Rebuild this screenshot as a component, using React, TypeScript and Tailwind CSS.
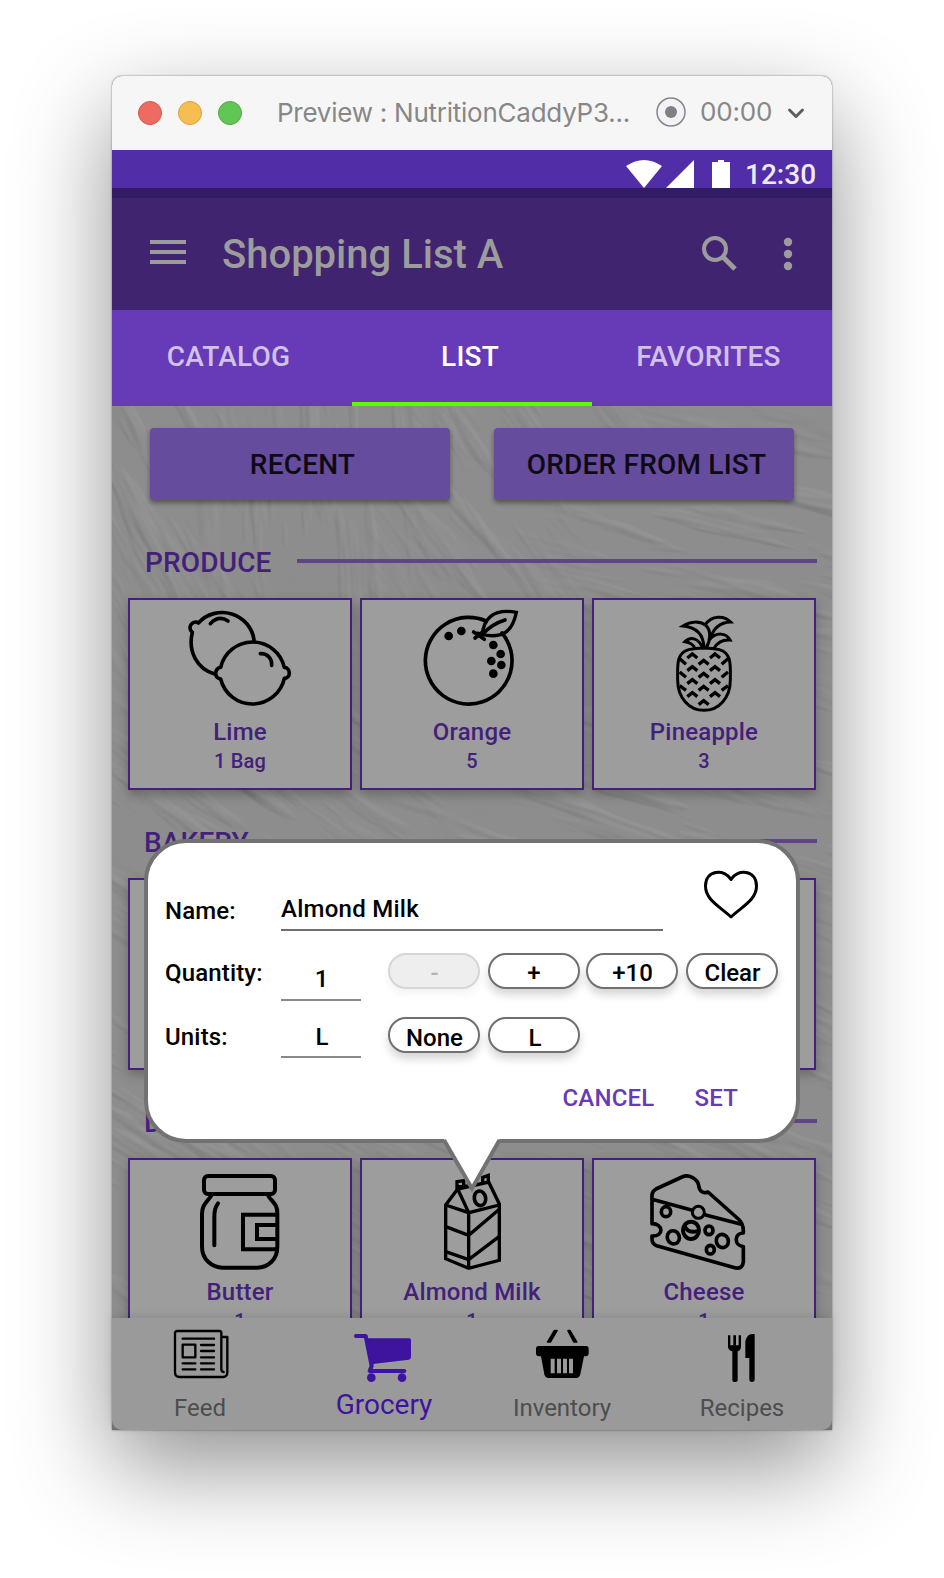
import React from "react";

type IconProps = { children: React.ReactNode; viewBox: string };

function FoodArt({ children, viewBox }: IconProps) {
  return (
    <svg
      className="h-[116px] w-[220px] shrink-0"
      viewBox={viewBox}
      fill="none"
      stroke="#000"
      strokeWidth={11}
      strokeLinecap="round"
      strokeLinejoin="round"
    >
      {children}
    </svg>
  );
}

function LimeIcon() {
  return (
    <FoodArt viewBox="60 60 660 348">
      <path d="M432 180 A96 94 0 0 0 265 129 C250 119 229 140 247 157 C233 215 262 268 314 282" />
      <path d="M301 131 Q326 104 354 123" />
      <path d="M332 262 A98 98 0 0 1 523 262 C543 264 543 294 523 295 A98 98 0 0 1 332 297 C311 292 313 267 332 262 Z" />
      <path d="M451 221 C471 219 486 235 485 256" />
    </FoodArt>
  );
}

function OrangeIcon() {
  return (
    <FoodArt viewBox="0 60 660 348">
      <path d="M372 123 A130 130 0 1 0 420 159" />
      <path d="M360 164 C366 120 389 84 463 97 C451 155 424 176 360 164 Z" strokeWidth={10} strokeLinejoin="miter" />
      <path d="M360 164 Q389 132 429 120 M335 156 L367 178 M339 174 L364 154 M347 160 L361 164" />
      <g fill="#000" stroke="none">
        <circle cx="260" cy="168" r="13" />
        <circle cx="298" cy="153" r="13" />
        <circle cx="394" cy="195" r="13" />
        <circle cx="416" cy="222" r="13" />
        <circle cx="388" cy="243" r="13" />
        <circle cx="418" cy="255" r="13" />
        <circle cx="394" cy="281" r="13" />
      </g>
    </FoodArt>
  );
}

const scales: [number, number][] = [
  [667, 222], [735, 222], [701, 241], [667, 260], [735, 260], [701, 280],
  [667, 299], [735, 299], [701, 319], [667, 338], [735, 338], [701, 362],
];

function PineappleIcon() {
  return (
    <FoodArt viewBox="372 60 660 348">
      <path
        strokeWidth={9}
        d="M656 209 C682 202 722 202 748 209 C786 220 781 256 781 300 C781 354 746 391 702 391 C658 391 623 354 623 300 C623 256 618 220 656 209 Z"
      />
      <path
        strokeWidth={9}
        strokeLinejoin="miter"
        d="M702 204 C701 167 683 142 639 138 C664 122 690 124 706 135 C724 149 722 181 709 203 M706 134 C725 105 762 106 782 126 C745 127 728 151 721 177 M698 204 C687 176 663 167 645 185 C661 187 669 192 675 205 M717 180 C740 155 768 158 780 180 C755 178 742 187 732 205"
      />
      <g strokeLinecap="butt" strokeLinejoin="miter" strokeWidth={10}>
        {scales.map(([x, y]) => (
          <path key={`${x}-${y}`} d={`M${x - 15} ${y + 12} L${x} ${y} L${x + 15} ${y + 12}`} />
        ))}
        <path d="M629 236 L648 253 M629 276 L648 292 M629 317 L648 331 M774 236 L755 253 M774 276 L755 292 M774 317 L755 331" />
      </g>
    </FoodArt>
  );
}

function ButterIcon() {
  return (
    <FoodArt viewBox="60 90 660 348">
      <g strokeWidth={12}>
        <rect x="282" y="138" width="213" height="54" rx="12" />
        <path d="M303 198 C290 218 276 224 276 252 L276 350 C276 389 307 413 338 413 L441 413 C474 413 502 389 502 350 L502 249 C502 221 487 217 475 198" />
        <path d="M324 220 C312 236 313 248 313 263 L313 346" />
        <path strokeLinecap="butt" strokeLinejoin="miter" d="M502 254 L399 254 L399 358 L502 358 M502 285 L441 285 L441 327 L502 327" />
      </g>
    </FoodArt>
  );
}

function MilkIcon() {
  return (
    <FoodArt viewBox="0 90 660 348">
      <g strokeWidth={10} strokeLinejoin="miter" strokeLinecap="butt">
        <path d="M251 225 L287 177 L380 156 L412 222 L412 391 L320 415 L251 386 Z" />
        <path d="M251 225 L320 248 L412 225 M287 177 L320 248 L320 415 M251 290 L320 316 L412 238 M251 365 L320 389 L412 319" />
        <path d="M285 178 L285 155 L305 152 L305 172 M362 158 L362 142 L379 136 L379 157 M285 171 L318 168" />
        <ellipse cx="354" cy="205" rx="17" ry="22" strokeWidth={11} transform="rotate(-10 354 205)" />
      </g>
    </FoodArt>
  );
}

function CheeseIcon() {
  return (
    <FoodArt viewBox="372 90 660 348">
      <path d="M546 208 L546 195 Q547 183 558 177 L636 141 C656 131 684 147 686 167 C688 187 703 191 714 186 L805 267 Q820 280 820 302 L820 309 C791 309 792 347 820 350 L820 396 Q818 417 797 414 L560 347 Q546 342 546 327 L546 318 C583 320 580 281 546 281 Z" />
      <path d="M546 208 L667 241 M704 254 L814 283" />
      <circle cx="685" cy="247" r="18" strokeWidth={9} />
      <ellipse cx="588" cy="245" rx="14" ry="15" />
      <ellipse cx="610" cy="322" rx="18" ry="20" transform="rotate(-20 610 322)" />
      <ellipse cx="663" cy="301" rx="24" ry="26" strokeWidth={12} />
      <path d="M644 287 Q655 313 684 302" />
      <ellipse cx="717" cy="301" rx="12" ry="13" />
      <ellipse cx="757" cy="333" rx="18" ry="20" transform="rotate(-20 757 333)" />
      <ellipse cx="721" cy="359" rx="12" ry="13" />
    </FoodArt>
  );
}

function FoodCard({ art, name, amount }: { art?: React.ReactNode; name: string; amount: string }) {
  return (
    <div className="flex h-48 w-56 flex-col items-center border-2 border-[#43217a] bg-[#9d9d9d] font-medium text-[#43217a] shadow-[0_5px_10px_rgba(0,0,0,0.24)]">
      {art ?? <div className="h-[116px]" />}
      <div className="h-8 text-2xl leading-8 tracking-[0.2px]">{name}</div>
      <div className="h-7 text-xl leading-[26px] tracking-[0.2px]">{amount}</div>
    </div>
  );
}

function Section({ title, children, indent }: { title: string; children: React.ReactNode; indent: string }) {
  return (
    <section className="flex h-[280px] flex-col">
      <div className="flex h-[52px] items-start pr-[15px]">
        <h2 className={`pt-px text-[28px] leading-8 font-medium tracking-[0.15px] text-[#43217a] ${indent}`}>{title}</h2>
        <div className="mt-[13px] h-1 w-[520px] bg-[#5f4586]" />
      </div>
      <div className="flex gap-2 pl-4">{children}</div>
    </section>
  );
}

const patches = [
  { x: 60, y: 120, w: 260, h: 300, r: 62, s: 3 },
  { x: 260, y: 90, w: 300, h: 260, r: 86, s: 8 },
  { x: 430, y: 120, w: 280, h: 280, r: 54, s: 14 },
  { x: 620, y: 150, w: 320, h: 260, r: 14, s: 21 },
  { x: 180, y: 420, w: 500, h: 300, r: 36, s: 29 },
  { x: 560, y: 430, w: 460, h: 300, r: 18, s: 33 },
  { x: 100, y: 740, w: 500, h: 460, r: 30, s: 35 },
  { x: 560, y: 740, w: 500, h: 460, r: 24, s: 47 },
];

function Plaster() {
  return (
    <svg className="absolute inset-0 h-full w-full opacity-[0.16]" viewBox="0 0 720 912" aria-hidden="true">
      <defs>
        <radialGradient id="fade">
          <stop offset="0.55" stopColor="#fff" />
          <stop offset="1" stopColor="#fff" stopOpacity="0" />
        </radialGradient>
        {patches.map((p) => (
          <React.Fragment key={p.s}>
            <filter id={`grain${p.s}`} x="0" y="0" width="1" height="1" colorInterpolationFilters="sRGB">
              <feTurbulence type="fractalNoise" baseFrequency="0.007 0.045" numOctaves={3} seed={p.s} />
              <feColorMatrix type="matrix" values="0 0 0 0 0  0 0 0 0 0  0 0 0 0 0  2.4 0 0 0 -1.2" />
              <feGaussianBlur stdDeviation="0.7" />
              <feDiffuseLighting surfaceScale={2} diffuseConstant={0.78} lightingColor="#ffffff">
                <feDistantLight azimuth={250} elevation={46} />
              </feDiffuseLighting>
            </filter>
            <mask id={`patch${p.s}`} maskUnits="userSpaceOnUse" x="-200" y="-200" width="1200" height="1400">
              <ellipse cx={p.x} cy={p.y} rx={p.w * 0.7} ry={p.h * 0.7} fill="url(#fade)" />
            </mask>
          </React.Fragment>
        ))}
      </defs>
      {patches.map((p) => (
        <g key={p.s} mask={`url(#patch${p.s})`}>
          <g transform={`rotate(${p.r} ${p.x} ${p.y})`}>
            <rect x={p.x - 400} y={p.y - 400} width={800} height={800} filter={`url(#grain${p.s})`} />
          </g>
        </g>
      ))}
    </svg>
  );
}

function Pill({ label, disabled, nudge, text }: { label: string; disabled?: boolean; nudge?: string; text?: string }) {
  return (
    <button
      className={`flex h-9 w-[92px] items-center justify-center rounded-full border-2 text-2xl font-medium ${nudge ?? ""} ${
        disabled
          ? "border-[#d6d6d6] bg-[#eeeeee] text-[#b4b4b4] shadow-[0_5px_9px_rgba(0,0,0,0.05)]"
          : "border-[#707070] bg-white text-black shadow-[0_6px_9px_rgba(0,0,0,0.16)]"
      }`}
    >
      <span className={`leading-8 ${text ?? "pt-[3px]"}`}>{label}</span>
    </button>
  );
}

function EditPopup() {
  return (
    <div className="absolute top-[763px] left-8 h-[304px] w-[656px] rounded-[42px] border-4 border-[#727272] bg-white text-2xl font-medium text-black">
      <div className="flex h-[88px] pl-[17px]">
        <div className="w-[116px] pt-[52px] leading-8 tracking-[0.1px]">Name:</div>
        <div className="h-[88px] w-[382px] border-b-2 border-[#707070] pt-[50px] leading-8 tracking-[0.25px]">Almond Milk</div>
        <svg className="mt-[27px] ml-[40px] h-[50px] w-[56px]" viewBox="0 0 56 50" fill="none" stroke="#000" strokeWidth={3} strokeLinejoin="round">
          <path d="M28 9.500 C22 -1.500 2.500 -0.500 2.500 16 C2.500 30 17 36.500 28 47 C39 36.500 53.500 30 53.500 16 C53.500 -0.500 34 -1.500 28 9.500 Z" />
        </svg>
      </div>
      <div className="flex h-[70px] pl-[17px]">
        <div className="w-[116px] pt-[26px] leading-8 tracking-[0.15px]">Quantity:</div>
        <div className="h-[70px] w-20 border-b-2 border-[#8a8a8a] pt-[32px] pl-px text-center leading-8">1</div>
        <div className="flex pt-[22px] pl-[27px]">
          <Pill label="-" disabled text="pt-[3px] pl-px" />
          <Pill label="+" nudge="ml-2" />
          <Pill label="+10" nudge="ml-1.5" text="pt-[3px] pl-px" />
          <Pill label="Clear" nudge="ml-2" text="pt-[3px] pl-px" />
        </div>
      </div>
      <div className="flex h-[57px] pl-[17px]">
        <div className="w-[116px] pt-[20px] leading-8 tracking-[0.15px]">Units:</div>
        <div className="h-[57px] w-20 border-b-2 border-[#8a8a8a] pt-[20px] pl-[2px] text-center leading-8">L</div>
        <div className="flex gap-2 pt-[16px] pl-[27px]">
          <Pill label="None" text="pt-[5px] pl-px" />
          <Pill label="L" text="pt-[5px] pl-[2px]" />
        </div>
      </div>
      <div className="flex justify-end gap-[40px] pt-[24px] pr-[58px] leading-8 tracking-[0.2px] text-[#673ab7]">
        <span>CANCEL</span>
        <span>SET</span>
      </div>
      <svg className="absolute top-[292px] left-[294px] h-[62px] w-[60px]" viewBox="0 0 60 62" fill="none">
        <path d="M0 0 H60 V4 L57.500 4 L30 54 L2 4 L0 4 Z" fill="#fff" />
        <path d="M2 5 L30 53.500 L57.500 5" stroke="#727272" strokeWidth={4} />
      </svg>
    </div>
  );
}

function BottomNav() {
  return (
    <nav className="relative grid h-28 grid-cols-4 rounded-b-[10px] bg-[#9a9a9a] text-2xl text-[#4d4d4d] shadow-[0_-2px_8px_rgba(0,0,0,0.1)]">
      <div className="flex flex-col items-center">
        <svg className="h-16 w-[180px]" viewBox="6 564 540 192" fill="none" stroke="#000" strokeWidth={7} strokeLinecap="round" strokeLinejoin="round">
          <path d="M334 618 V609 Q334 603 328 603 H202 Q195 603 195 610 V727 Q195 741 209 741 H339 Q352 741 352 727 V621 H334 V718 Q334 725 341 726" />
          <path d="M218 626 H312 M273 645 H312 M273 663 H312 M273 682 H312 M218 700 H256 M273 700 H312 M218 718 H256 M273 718 H312" />
          <rect x="218" y="644" width="38" height="38" />
        </svg>
        <span className="pt-3 pr-[4px] leading-7">Feed</span>
      </div>
      <div className="flex flex-col items-center text-[28px] text-[#3e139e]">
        <svg className="h-16 w-[180px]" viewBox="546 564 540 192" fill="#3e139e" stroke="#3e139e" strokeLinecap="round" strokeLinejoin="round">
          <path d="M738 618 H767 L785 708 L779 723 H883" fill="none" strokeWidth={12} />
          <path d="M770 628 H898 Q900 628 900 631 V681 Q900 685 896 686 L782 700 Z" strokeWidth={6} />
          <circle cx="784" cy="743" r="13" stroke="none" />
          <circle cx="876" cy="743" r="13" stroke="none" />
        </svg>
        <span className="pt-[9px] pl-[4px] leading-7">Grocery</span>
      </div>
      <div className="flex flex-col items-center">
        <svg className="h-16 w-[180px]" viewBox="6 564 540 192">
          <path d="M253 602 H261 L241 636 H233 Z M294 602 H300 L320 636 H312 Z" fill="#000" stroke="#000" strokeWidth={5} strokeLinejoin="round" />
          <path
            fillRule="evenodd"
            d="M206 648 H348 Q356 648 356 656 V670 Q356 679 347 679 H342 L331 733 Q329 744 318 744 H236 Q225 744 223 733 L213 679 H207 Q198 679 198 670 V656 Q198 648 206 648 Z M242 686 V730 H254 V686 Z M261 686 V730 H273 V686 Z M279 686 V730 H291 V686 Z M297 686 V730 H309 V686 Z"
          />
        </svg>
        <span className="pt-3 leading-7">Inventory</span>
      </div>
      <div className="flex flex-col items-center">
        <svg className="h-16 w-[180px]" viewBox="546 564 540 192">
          <path d="M774 616 H781 V646 H790 V616 H798 V646 H806 V616 H813 V650 Q813 660 803 664 V749 Q803 756 795 756 Q787 756 787 749 V664 Q774 660 774 650 Z" />
          <path d="M854 612 V748 Q854 756 846 756 Q838 756 838 748 V684 H826 V634 Q831 612 847 612 Z" />
        </svg>
        <span className="pt-3 leading-7">Recipes</span>
      </div>
    </nav>
  );
}

export default function App() {
  return (
    <div className="flex h-[1578px] w-[944px] items-start justify-center overflow-hidden bg-white pt-[76px] font-['Roboto',sans-serif]">
      <div className="relative flex h-[1354px] w-[720px] flex-col rounded-t-[10px] bg-[#747474] shadow-[0_36px_96px_rgba(0,0,0,0.44),0_0_2px_rgba(0,0,0,0.55)]">
        <header className="flex h-[74px] items-center rounded-t-[10px] bg-[#f6f6f6] pl-[26px] font-['Inter',sans-serif] text-[#878787]">
          <div className="flex gap-4">
            <span className="h-6 w-6 rounded-full border border-[#dd5548] bg-[#ed6b60]" />
            <span className="h-6 w-6 rounded-full border border-[#dba13b] bg-[#f6be50]" />
            <span className="h-6 w-6 rounded-full border border-[#4eab40] bg-[#62c655]" />
          </div>
          <div className="ml-[35px] w-[374px] pb-px text-[26px] tracking-[-0.25px] whitespace-nowrap">Preview : NutritionCaddyP3...</div>
          <svg className="mb-[3px] ml-[5px] h-[30px] w-[30px]" viewBox="0 0 30 30">
            <circle cx="15" cy="15" r="14" fill="#f3f2f9" stroke="#858585" strokeWidth={1.5} />
            <circle cx="15" cy="15" r="6" fill="#808080" />
          </svg>
          <span className="ml-[14px] w-[74px] pb-[3px] text-[26px] tracking-[-0.2px]">00:00</span>
          <svg className="ml-[13px] h-4 w-[18px]" viewBox="0 0 18 16" fill="none" stroke="#5f5f5f" strokeWidth={3} strokeLinecap="round" strokeLinejoin="round">
            <path d="M2.500 5 L9 11.500 L15.500 5" />
          </svg>
        </header>

        <div className="flex h-[38px] items-end bg-[#512da8] pl-[514px] text-white">
          <svg className="h-[28px] w-[106px]" viewBox="0 0 106 28" fill="#fff">
            <path d="M0 6 Q18 -6 36 6 L18 28 Z M40 28 L68 0 V28 Z M86 2 H92 V0 H98 V2 H104 V28 H86 Z" />
          </svg>
          <span className="ml-[13px] text-[28px] leading-[26px] font-medium text-[#eeeaf6]">12:30</span>
        </div>
        <div className="h-2.5 bg-[#321c66]" />

        <div className="flex h-28 items-center bg-[#40246f] pl-[38px] text-[#9c9c9c]">
          <svg className="h-6 w-9 overflow-visible" viewBox="0 0 36 24" fill="#9c9c9c">
            <path d="M0 -2 H36 V2 H0 Z M0 8 H36 V12 H0 Z M0 18 H36 V22 H0 Z" />
          </svg>
          <h1 className="ml-9 w-[480px] pt-[2px] text-[40px] leading-[48px] font-medium">Shopping List A</h1>
          <svg className="h-9 w-9" viewBox="0 0 36 36" fill="none" stroke="#9c9c9c" strokeWidth={4}>
            <circle cx="13" cy="13" r="11" />
            <path d="M21.500 21.500 L33 33" strokeWidth={5} />
          </svg>
          <svg className="ml-[46px] h-8 w-2" viewBox="0 0 8 32" fill="#9c9c9c" overflow="visible">
            <circle cx="4" cy="4" r="4.200" />
            <circle cx="4" cy="16" r="4.200" />
            <circle cx="4" cy="28" r="4.200" />
          </svg>
        </div>

        <div className="grid h-24 grid-cols-3 bg-[#673ab7] text-center text-[28px] leading-8 font-medium tracking-[0.2px] text-[#d1c2ea]">
          <div className="pt-[31px] pr-[7px]">CATALOG</div>
          <div className="border-b-4 border-[#59ff00] pt-[31px] pr-[4px] text-white">LIST</div>
          <div className="pt-[31px] pr-[7px]">FAVORITES</div>
        </div>

        <main className="relative h-[912px] overflow-hidden bg-[#8d8d8d]">
          <Plaster />
          <div className="relative flex flex-col">
            <div className="flex h-[134px] gap-11 pt-[22px] pl-[38px] text-[28px] font-medium tracking-[0.2px] text-[#0d0a14]">
              <button className="h-[72px] w-[300px] rounded-[4px] bg-[#654c9c] pt-[2px] pl-[5px] shadow-[0_3px_5px_rgba(0,0,0,0.4)]">RECENT</button>
              <button className="h-[72px] w-[300px] rounded-[4px] bg-[#654c9c] pt-[2px] pl-[5px] shadow-[0_3px_5px_rgba(0,0,0,0.4)]">ORDER FROM LIST</button>
            </div>
            <div className="h-1.5" />
            <Section title="PRODUCE" indent="w-[185px] pl-[33px]">
              <FoodCard art={<LimeIcon />} name="Lime" amount="1 Bag" />
              <FoodCard art={<OrangeIcon />} name="Orange" amount="5" />
              <FoodCard art={<PineappleIcon />} name="Pineapple" amount="3" />
            </Section>
            <Section title="BAKERY" indent="w-[185px] pl-8">
              <FoodCard name="" amount="" />
              <FoodCard name="" amount="" />
              <FoodCard name="" amount="" />
            </Section>
            <Section title="DAIRY" indent="w-[185px] pl-8">
              <FoodCard art={<ButterIcon />} name="Butter" amount="1" />
              <FoodCard art={<MilkIcon />} name="Almond Milk" amount="1" />
              <FoodCard art={<CheeseIcon />} name="Cheese" amount="1" />
            </Section>
          </div>
        </main>

        <BottomNav />
        <EditPopup />
      </div>
    </div>
  );
}
